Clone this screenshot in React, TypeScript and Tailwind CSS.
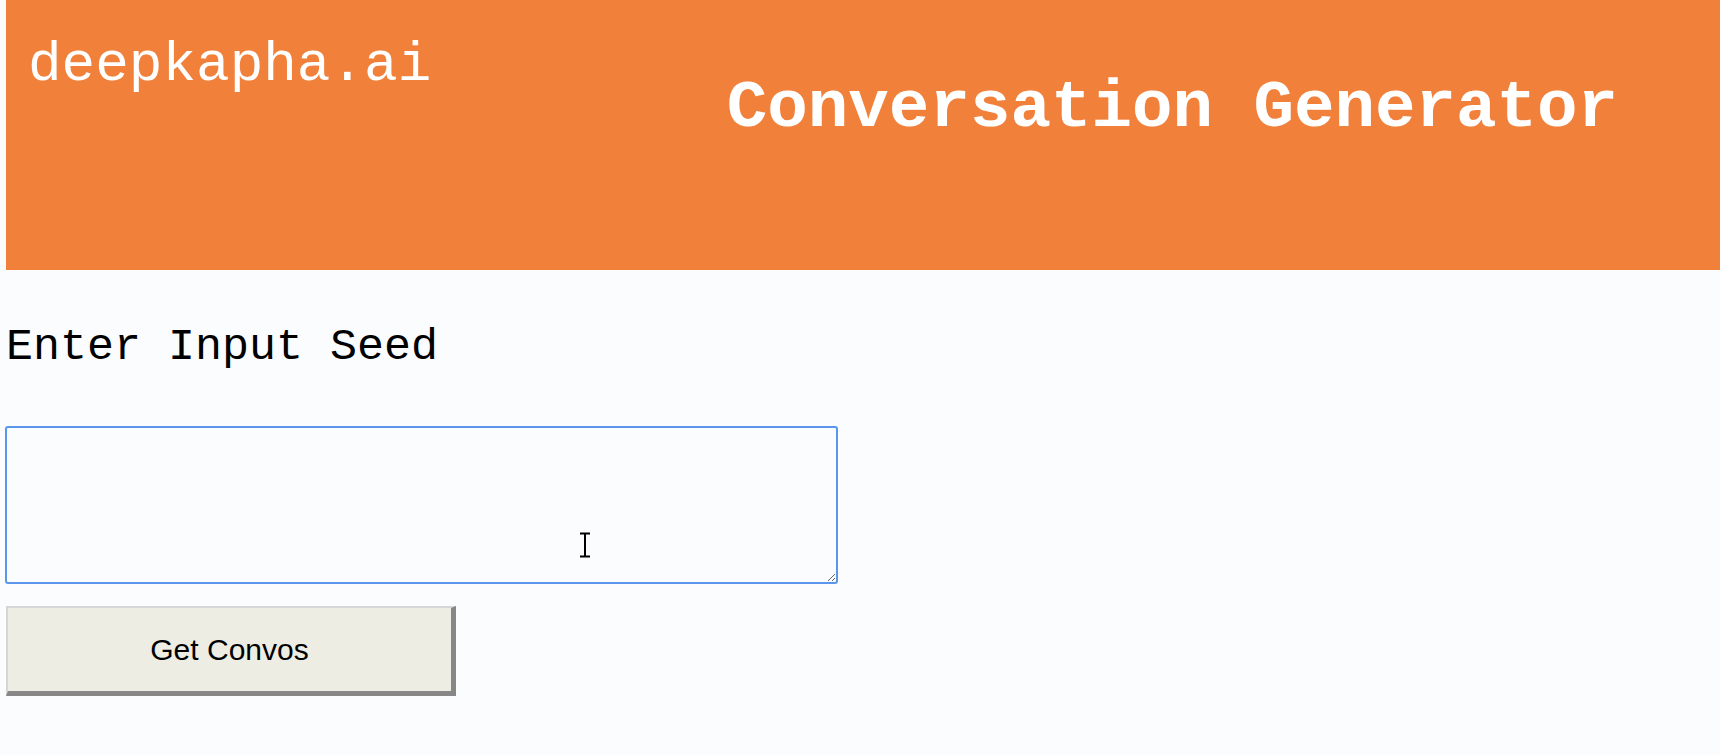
const mono = { fontFamily: '"Liberation Mono", "Courier New", monospace' };

const Cursor = () => (
  <svg
    width="14"
    height="26"
    viewBox="0 0 14 26"
    className="absolute left-[573px] top-[106px] pointer-events-none"
  >
    <path d="M2 1.5h10M2 24.5h10M7 1.5v23" stroke="#000" strokeWidth="2" fill="none" />
  </svg>
);

const App = () => {
  return (
    <div className="min-h-screen w-full bg-[#fbfcfe] pl-[6px]">
      <header className="h-[270px] w-full bg-[#f1803b] flex justify-between pl-[22px] pr-[102px]">
        <div style={mono} className="pt-[37px] text-[56px] leading-none text-white">
          deepkapha.ai
        </div>
        <h1
          style={mono}
          className="mt-[75px] text-[67.5px] leading-none font-bold text-white"
        >
          Conversation Generator
        </h1>
      </header>

      <main className="flex flex-col items-start">
        <p style={mono} className="mt-[55px] text-[45px] leading-none text-black">
          Enter Input Seed
        </p>

        <div className="relative mt-[56px] -ml-[1px]">
          <textarea className="block w-[833px] h-[158px] border-2 border-[#5a97ec] rounded-[3px] bg-transparent outline-none" />
          <Cursor />
        </div>

        <button
          className="mt-[22px] w-[450px] h-[90px] flex items-center justify-center bg-[#edede4] border-solid border-t-2 border-l-2 border-b-[5px] border-r-[5px] border-t-[#d6d6d6] border-l-[#d6d6d6] border-b-[#878787] border-r-[#878787] text-[30px] text-black"
          style={{ fontFamily: '"Liberation Sans", Arial, sans-serif' }}
        >
          Get Convos
        </button>
      </main>
    </div>
  );
};

export default App;
